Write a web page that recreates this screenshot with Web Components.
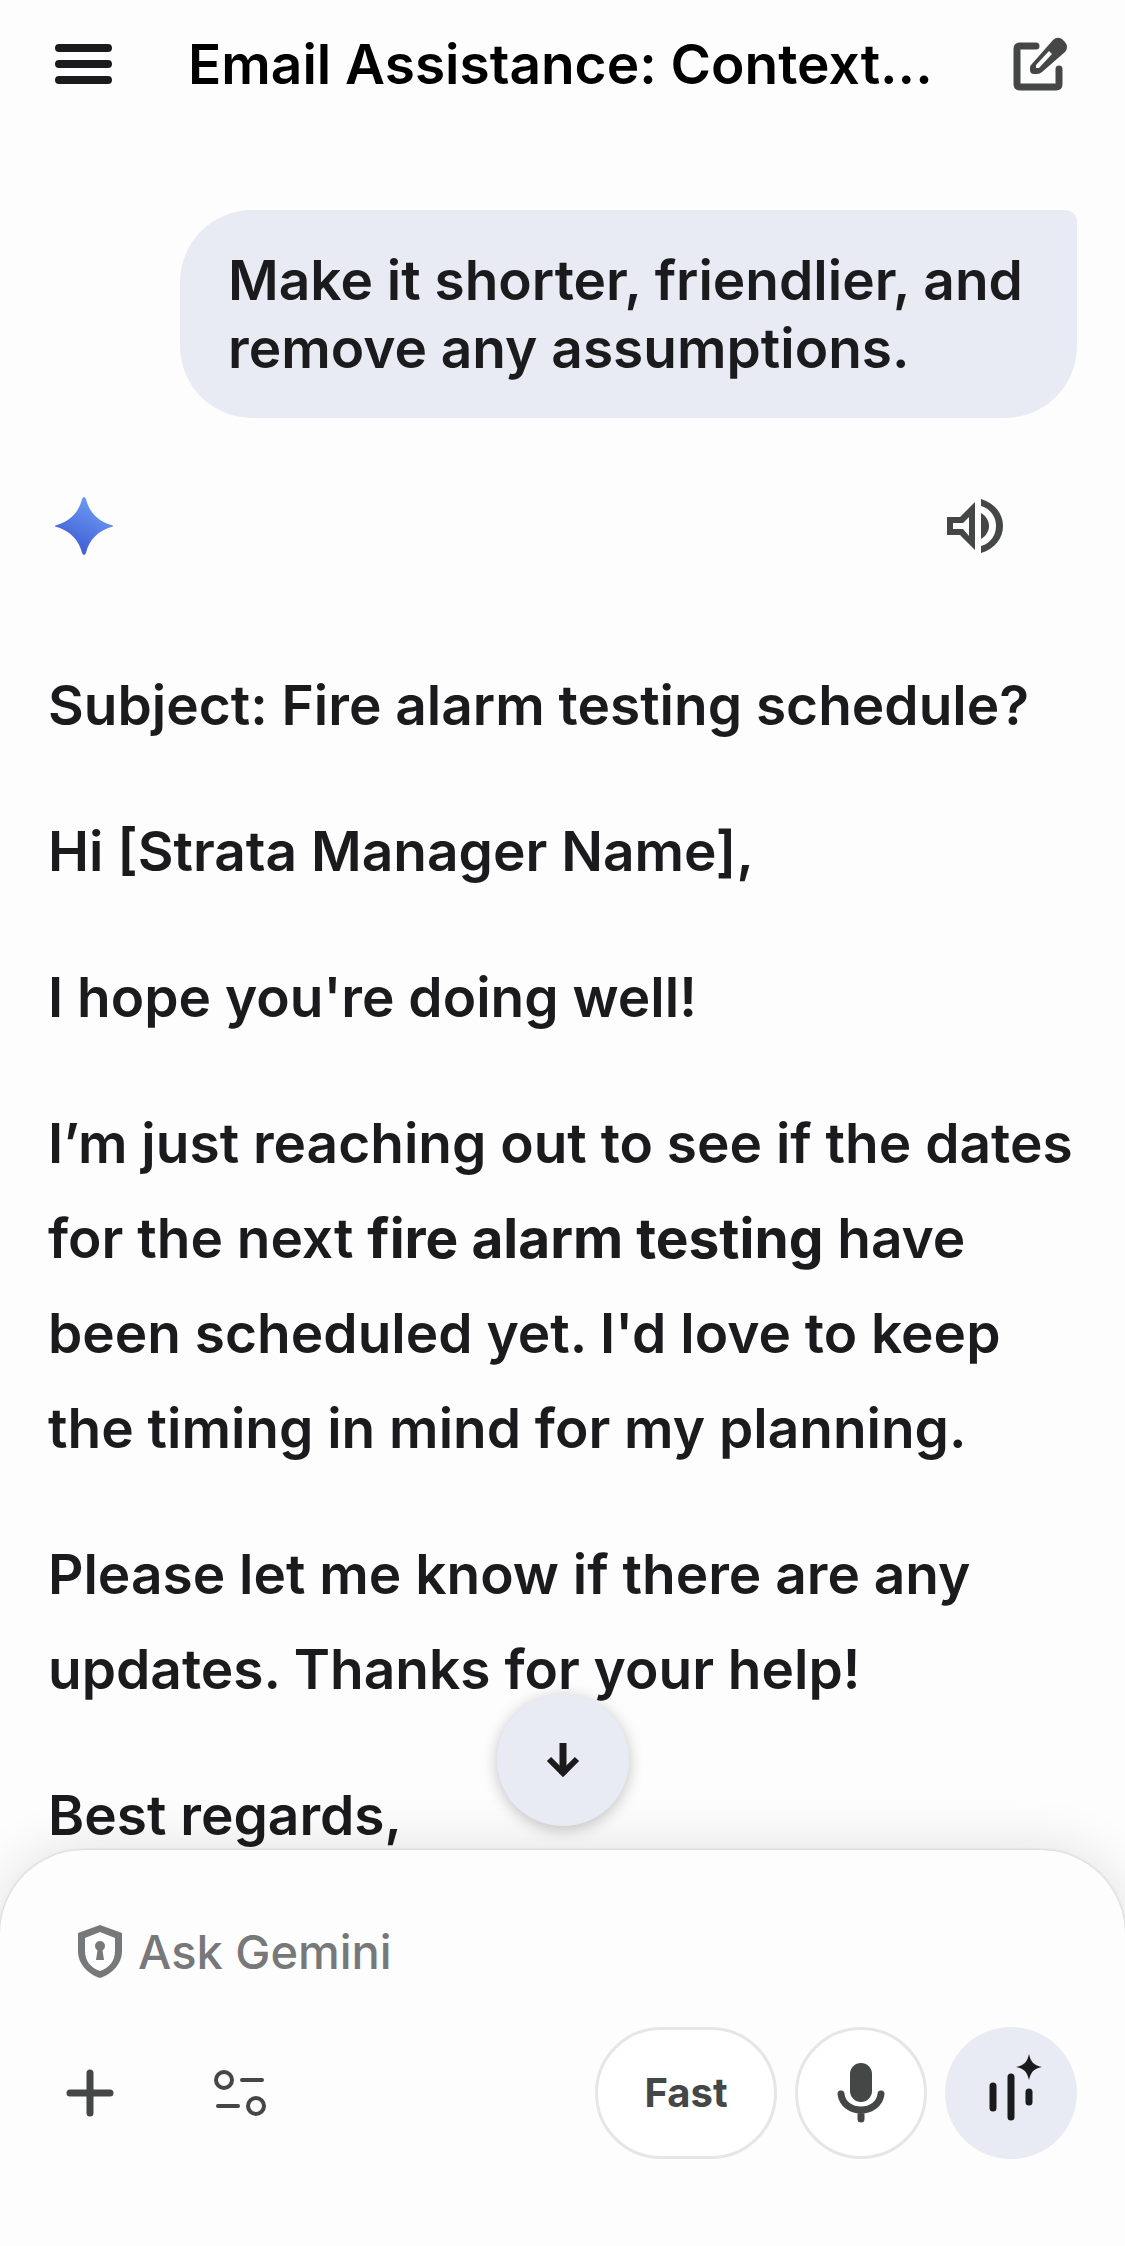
<!DOCTYPE html>
<html lang="en">
<head>
<meta charset="utf-8">
<meta name="viewport" content="width=device-width, initial-scale=1">
<title>Email Assistance</title>
<style>
  body {
    margin: 0;
    background: #fdfdfd;
    color: #1b1b1d;
    font-family: Inter, "Liberation Sans", sans-serif;
  }
</style>
</head>
<body>

<chat-page>
  <chat-header slot="header">Email Assistance: Context...</chat-header>

  <user-message>Make it shorter, friendlier, and remove any assumptions.</user-message>

  <model-reply>
    <p>Subject: Fire alarm testing schedule?</p>
    <p>Hi [Strata Manager Name],</p>
    <p>I hope you're doing well!</p>
    <p>I’m just reaching out to see if the dates for the next <strong style="font-weight: 700">fire alarm testing</strong> have been scheduled yet. I'd love to keep the timing in mind for my planning.</p>
    <p>Please let me know if there are any updates. Thanks for your help!</p>
    <p>Best regards,</p>
  </model-reply>

  <prompt-composer slot="footer" placeholder="Ask Gemini" mode="Fast"></prompt-composer>
</chat-page>

<script>
const ICONS = {
  menu: `<svg width="58" height="42" viewBox="0 0 58 42" stroke="#1b1b1d" stroke-width="8" stroke-linecap="round">
    <path d="M4 5H53M4 21H53M4 37H53"/></svg>`,

  compose: `<svg width="56" height="56" viewBox="0 0 56 56">
    <path d="M23 10H7Q4 10 4 13V48Q4 51 7 51H43Q46 51 46 48V33" fill="none" stroke="#444746" stroke-width="7" stroke-linecap="round"/>
    <path fill="#444746" fill-rule="evenodd" d="M18 29L40 4Q44 0 49 3L52 6Q56 11 52 16L29 36Q27 38 24 38H21Q17 38 17 34V32Q17 30 18 29ZM23 29V32H26L39 18L36 15Z"/></svg>`,

  sparkle: `<svg width="58" height="58" viewBox="0 0 58 58">
    <defs><linearGradient id="g" x1="0.3" y1="0.8" x2="0.7" y2="0.1"><stop offset="0" stop-color="#4463d8"/><stop offset="1" stop-color="#6c9af2"/></linearGradient></defs>
    <path fill="url(#g)" d="M29 0Q30 0 31 2C34 15 43 24 56 28Q58 28 58 29Q58 30 56 30C43 34 34 43 31 56Q30 58 29 58Q28 58 27 56C24 43 15 34 2 30Q0 30 0 29Q0 28 2 28C15 24 24 15 27 2Q28 0 29 0Z"/></svg>`,

  speaker: `<svg width="56" height="56" viewBox="0 0 56 56" fill="#444746">
    <path fill-rule="evenodd" d="M0 19H13L28 4V52L13 37H0ZM6 25V31H16L22 38V19L16 25Z"/>
    <path d="M34 15C39 18 42 23 42 28S39 38 34 41Z"/>
    <path d="M34 1C48 5 56 16 56 28S48 51 34 55V48C44 45 49 37 49 28S44 11 34 8Z"/></svg>`,

  shield: `<svg width="44" height="54" viewBox="0 0 44 54" fill="#777879">
    <path fill-rule="evenodd" d="M22 0L44 8V26C44 39 34 49 22 53C10 49 0 39 0 26V8ZM22 7L7 13V26C7 36 13 43 22 46C31 43 37 36 37 26V13Z"/>
    <circle cx="22" cy="21" r="5"/><path d="M20 22H24L26 35H18Z"/></svg>`,

  plus: `<svg width="48" height="48" viewBox="0 0 48 48" stroke="#444746" stroke-width="7" stroke-linecap="round">
    <path d="M24 4V44M4 24H44"/></svg>`,

  tools: `<svg width="52" height="46" viewBox="0 0 52 46" fill="none" stroke="#444746" stroke-width="4" stroke-linecap="round">
    <circle cx="10" cy="10" r="8"/><circle cx="42" cy="36" r="8"/><path d="M28 10H48M4 36H24"/></svg>`,

  mic: `<svg width="48" height="60" viewBox="0 0 48 60">
    <rect x="13" y="0" width="22" height="39" rx="11" fill="#444746"/>
    <path d="M4 31C5 41 14 47 24 47S43 41 44 31M24 48V56" fill="none" stroke="#444746" stroke-width="7" stroke-linecap="round"/></svg>`,

  live: `<svg width="72" height="80" viewBox="0 0 72 80">
    <path d="M18 33V55M36 24V64M54 39V49" stroke="#1b1b1d" stroke-width="7" stroke-linecap="round"/>
    <path fill="#1b1b1d" d="M54 1C56 9 58 12 67 14C58 16 56 19 54 27C52 19 50 16 41 14C50 12 52 9 54 1Z"/></svg>`,

  down: `<svg width="36" height="36" viewBox="0 0 36 36" fill="none" stroke="#1b1b1d">
    <path d="M18 1V32" stroke-width="7"/><path d="M4 17L18 31L32 17" stroke-width="6"/></svg>`
};

// Button with one icon. Variants: plain (default), outlined, tonal
class IconButton extends HTMLElement {
  constructor() {
    super();
    this.attachShadow({ mode: 'open' });
  }

  connectedCallback() {
    this.shadowRoot.innerHTML = `
      <style>
        :host { display: block; flex: none; }
        button {
          display: flex;
          align-items: center;
          justify-content: center;
          box-sizing: border-box;
          width: 96px;
          height: 96px;
          padding: 0;
          border: 0;
          border-radius: 50%;
          background: none;
          cursor: pointer;
        }
        :host([variant]) button { width: 132px; height: 132px; }
        :host([variant="outlined"]) button { background: #fff; border: 3px solid #e6e6e6; }
        :host([variant="tonal"]) button { background: #e8ebf3; }
        :host([raised]) button { box-shadow: 0 3px 16px rgba(0, 0, 0, 0.24); }
        svg { display: block; overflow: visible; }
      </style>
      <button type="button" aria-label="${this.getAttribute('label')}">${ICONS[this.getAttribute('icon')]}</button>
    `;
  }
}

class ChatHeader extends HTMLElement {
  constructor() {
    super();
    this.attachShadow({ mode: 'open' }).innerHTML = `
      <style>
        :host {
          display: flex;
          align-items: center;
          padding: 16px 36px;
        }
        h1 {
          flex: 1;
          min-width: 0;
          margin: 0 56px;
          overflow: hidden;
          white-space: nowrap;
          text-overflow: ellipsis;
          color: #000;
          font-size: 55px;
          font-weight: 600;
          line-height: 72px;
        }
      </style>
      <icon-button icon="menu" label="Menu"></icon-button>
      <h1><slot></slot></h1>
      <icon-button icon="compose" label="New chat"></icon-button>
    `;
  }
}

class UserMessage extends HTMLElement {
  constructor() {
    super();
    this.attachShadow({ mode: 'open' }).innerHTML = `
      <style>
        :host {
          display: block;
          margin: 82px 48px 0 180px;
          padding: 36px 48px;
          border-radius: 72px 12px 72px 72px;
          background: #e8ebf3;
          font-size: 55px;
          font-weight: 600;
          line-height: 68px;
        }
      </style>
      <slot></slot>
    `;
  }
}

class ModelReply extends HTMLElement {
  constructor() {
    super();
    this.attachShadow({ mode: 'open' }).innerHTML = `
      <style>
        :host { display: block; margin-top: 60px; }
        .bar {
          display: flex;
          align-items: center;
          justify-content: space-between;
          padding: 0 102px 0 55px;
        }
        .text {
          display: flex;
          flex-direction: column;
          gap: 51px;
          padding: 84px 48px 0;
          font-size: 55px;
          font-weight: 600;
          line-height: 95px;
        }
        ::slotted(p) { margin: 0; }
      </style>
      <div class="bar">
        ${ICONS.sparkle}
        <icon-button icon="speaker" label="Listen"></icon-button>
      </div>
      <div class="text"><slot></slot></div>
    `;
  }
}

class PromptComposer extends HTMLElement {
  constructor() {
    super();
    this.attachShadow({ mode: 'open' });
  }

  connectedCallback() {
    const placeholder = this.getAttribute('placeholder');

    this.shadowRoot.innerHTML = `
      <style>
        :host {
          display: block;
          position: relative;
          padding: 64px 48px 87px 42px;
          border-radius: 84px 84px 0 0;
          background: #fdfdfd;
          box-shadow: 0 0 3px rgba(0, 0, 0, 0.2), 0 0 56px rgba(0, 0, 0, 0.12);
        }
        label {
          display: flex;
          align-items: center;
          gap: 16px;
          padding-left: 36px;
        }
        input {
          flex: 1;
          min-width: 0;
          height: 76px;
          padding: 0;
          border: 0;
          outline: 0;
          background: none;
          color: #1b1b1d;
          font: 500 47px/76px Inter, "Liberation Sans", sans-serif;
        }
        input::placeholder { color: #777879; opacity: 1; }
        .actions {
          display: flex;
          align-items: center;
          gap: 18px;
          margin-top: 37px;
        }
        .left { display: flex; gap: 54px; margin-right: auto; }
        .mode {
          box-sizing: border-box;
          min-width: 182px;
          height: 132px;
          padding: 0 40px;
          border: 3px solid #e6e6e6;
          border-radius: 66px;
          background: #fff;
          color: #444746;
          font: 700 40px/52px Inter, "Liberation Sans", sans-serif;
          cursor: pointer;
        }
        /* floats over the end of the conversation */
        .scroll {
          position: absolute;
          left: 0;
          right: 0;
          bottom: 100%;
          display: flex;
          justify-content: center;
          margin-bottom: 24px;
          pointer-events: none;
        }
        .scroll icon-button { pointer-events: auto; }
      </style>
      <div class="scroll">
        <icon-button variant="tonal" raised icon="down" label="Scroll to bottom"></icon-button>
      </div>
      <label>
        ${ICONS.shield}
        <input type="text" placeholder="${placeholder}" aria-label="${placeholder}">
      </label>
      <div class="actions">
        <div class="left">
          <icon-button icon="plus" label="Add files"></icon-button>
          <icon-button icon="tools" label="Tools"></icon-button>
        </div>
        <button class="mode" type="button">${this.getAttribute('mode')}</button>
        <icon-button variant="outlined" icon="mic" label="Dictate"></icon-button>
        <icon-button variant="tonal" icon="live" label="Live"></icon-button>
      </div>
    `;
  }
}

class ChatPage extends HTMLElement {
  constructor() {
    super();
    this.attachShadow({ mode: 'open' }).innerHTML = `
      <style>
        :host {
          display: flex;
          flex-direction: column;
          height: 100vh;
        }
        header, footer { flex: none; }
        main {
          flex: 1;
          min-height: 0;
          overflow-y: auto;
          scrollbar-width: none;
        }
      </style>
      <header><slot name="header"></slot></header>
      <main><slot></slot></main>
      <footer><slot name="footer"></slot></footer>
    `;
  }
}

customElements.define('icon-button', IconButton);
customElements.define('chat-header', ChatHeader);
customElements.define('user-message', UserMessage);
customElements.define('model-reply', ModelReply);
customElements.define('prompt-composer', PromptComposer);
customElements.define('chat-page', ChatPage);
</script>
</body>
</html>
